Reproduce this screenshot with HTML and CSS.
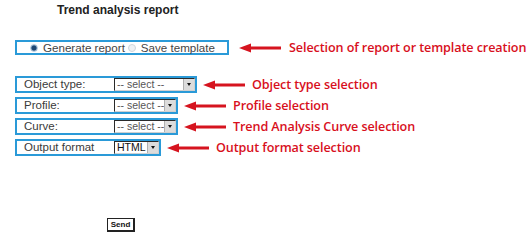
FILE: index.html
```html
<!DOCTYPE html>
<html>
<head>
<meta charset="utf-8">
<link rel="stylesheet" href="styles.css">
</head>
<body>
<div class="page">
  <div class="title">Trend analysis report</div>

  <div class="row row-radio">
    <div class="box radio-box">
      <span class="radio checked"></span><span class="rlabel">Generate report</span>
      <span class="radio"></span><span class="rlabel">Save template</span>
    </div>
    <svg class="arrow arrow-first" width="42" height="10" viewBox="0 0 42 10"><rect x="10" y="3.5" width="32" height="3" fill="#d6141f"/><polygon points="0,5 12,0.5 12,9.5" fill="#d6141f"/></svg>
    <span class="note">Selection of report or template creation</span>
  </div>

  <div class="fields">
    <div class="row">
      <div class="box field">
        <span class="flabel">Object type:</span>
        <span class="select w-obj"><span class="stext">-- select --</span><span class="sbtn"></span></span>
      </div>
      <svg class="arrow" width="42" height="10" viewBox="0 0 42 10"><rect x="10" y="3.5" width="32" height="3" fill="#d6141f"/><polygon points="0,5 12,0.5 12,9.5" fill="#d6141f"/></svg>
      <span class="note">Object type selection</span>
    </div>
    <div class="row">
      <div class="box field">
        <span class="flabel">Profile:</span>
        <span class="select w-mid"><span class="stext">-- select --</span><span class="sbtn"></span></span>
      </div>
      <svg class="arrow" width="42" height="10" viewBox="0 0 42 10"><rect x="10" y="3.5" width="32" height="3" fill="#d6141f"/><polygon points="0,5 12,0.5 12,9.5" fill="#d6141f"/></svg>
      <span class="note">Profile selection</span>
    </div>
    <div class="row">
      <div class="box field">
        <span class="flabel">Curve:</span>
        <span class="select w-mid"><span class="stext">-- select --</span><span class="sbtn"></span></span>
      </div>
      <svg class="arrow" width="42" height="10" viewBox="0 0 42 10"><rect x="10" y="3.5" width="32" height="3" fill="#d6141f"/><polygon points="0,5 12,0.5 12,9.5" fill="#d6141f"/></svg>
      <span class="note">Trend Analysis Curve selection</span>
    </div>
    <div class="row">
      <div class="box field">
        <span class="flabel">Output format</span>
        <span class="select w-out"><span class="stext dark">HTML</span><span class="sbtn"></span></span>
      </div>
      <svg class="arrow" width="42" height="10" viewBox="0 0 42 10"><rect x="10" y="3.5" width="32" height="3" fill="#d6141f"/><polygon points="0,5 12,0.5 12,9.5" fill="#d6141f"/></svg>
      <span class="note">Output format selection</span>
    </div>
  </div>

  <div class="send-wrap"><span class="send">Send</span></div>
</div>
</body>
</html>
```
FILE: styles.css
```css
* { box-sizing: border-box; }
html, body { margin: 0; padding: 0; background: #fff; }
body { font-family: "Liberation Sans", Arial, sans-serif; color: #3a3a3a; }

.page { padding-left: 15px; }

.title {
  margin: 3px 0 0 42px;
  height: 14px;
  line-height: 14px;
  font-size: 12px;
  font-weight: bold;
  color: #222;
}

.row {
  display: flex;
  align-items: center;
}

.row-radio { margin-top: 22px; }

.box {
  border: 2px solid #2a9ad8;
  display: flex;
  align-items: center;
}

.radio-box {
  width: 214px;
  height: 15px;
  padding-left: 13px;
  font-size: 11.6px;
}

.radio {
  width: 8px;
  height: 8px;
  border-radius: 50%;
  border: 1px solid #cfd6dc;
  background: #eef1f4;
  margin-right: 5px;
}
.radio.checked {
  background: radial-gradient(circle, #1f4772 0 2px, #6d93bb 3px);
  border-color: #b7c9da;
}
.rlabel { margin-right: 3px; color: #444; line-height: 12px; }

.arrow { flex: none; margin-left: 6px; margin-right: 7px; }
.arrow.arrow-first { margin-left: 10px; margin-right: 8px; }

.note {
  font-family: "Open Sans", "Noto Sans", sans-serif;
  font-weight: 600;
  font-size: 12.6px;
  color: #d8101d;
  white-space: nowrap;
  letter-spacing: -0.1px;
}

.fields {
  margin-top: 20px;
  display: flex;
  flex-direction: column;
  gap: 4px;
}

.field {
  height: 17px;
}

.flabel {
  width: 97px;
  padding-left: 7px;
  font-size: 11.5px;
  color: #3a3a3a;
  line-height: 13px;
}

.select {
  height: 13px;
  display: flex;
  align-items: stretch;
  border-top: 1px solid #2a2a2a;
  border-left: 1px solid #2a2a2a;
  border-bottom: 1px solid #d0d0d0;
  border-right: 1px solid #d0d0d0;
  background: #fff;
}
.w-obj { width: 81px; }
.w-mid { width: 62px; }
.w-out { width: 45px; }

.stext {
  flex: 1;
  font-size: 10.5px;
  line-height: 11px;
  color: #555;
  padding-left: 2px;
  white-space: nowrap;
}
.stext.dark { color: #111; font-size: 10.5px; padding-left: 2px; }

.sbtn {
  width: 11px;
  flex: none;
  background: #dcdcdc;
  border-left: 1px solid #b0b0b0;
  position: relative;
}
.sbtn::after {
  content: "";
  position: absolute;
  left: 3px;
  top: 4px;
  border-left: 2.5px solid transparent;
  border-right: 2.5px solid transparent;
  border-top: 3px solid #111;
}

.send-wrap { display: flex; margin-top: 62px; padding-left: 92px; }
.send {
  width: 28px;
  height: 14px;
  border: 1px solid #222;
  border-right-width: 2px;
  border-bottom-width: 2px;
  font-size: 8px;
  font-weight: bold;
  color: #111;
  text-align: center;
  line-height: 11px;
}
```
